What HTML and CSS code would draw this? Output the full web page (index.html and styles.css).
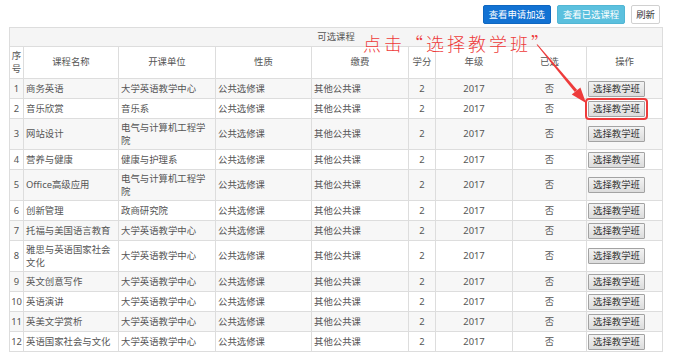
FILE: index.html
```html
<!DOCTYPE html>
<html lang="zh-CN">
<head>
<meta charset="utf-8">
<title>可选课程</title>
<link rel="stylesheet" href="styles.css">
</head>
<body>
<div class="page">
  <div class="toolbar">
    <button class="tbtn primary">查看申请加选</button>
    <button class="tbtn info">查看已选课程</button>
    <button class="tbtn plain">刷新</button>
  </div>
  <table class="grid">
    <colgroup>
      <col class="c-seq"><col class="c-name"><col class="c-unit"><col class="c-kind"><col class="c-fee"><col class="c-credit"><col class="c-grade"><col class="c-sel"><col class="c-op">
    </colgroup>
    <thead>
      <tr class="title"><th colspan="9">可选课程</th></tr>
      <tr class="head">
        <th class="seq">序号</th><th>课程名称</th><th>开课单位</th><th>性质</th><th>缴费</th><th>学分</th><th>年级</th><th>已选</th><th>操作</th>
      </tr>
    </thead>
    <tbody>
      <tr><td class="seq">1</td><td>商务英语</td><td>大学英语教学中心</td><td>公共选修课</td><td>其他公共课</td><td class="ctr">2</td><td class="ctr">2017</td><td class="ctr">否</td><td><button class="pick">选择教学班</button></td></tr>
      <tr><td class="seq">2</td><td>音乐欣赏</td><td>音乐系</td><td>公共选修课</td><td>其他公共课</td><td class="ctr">2</td><td class="ctr">2017</td><td class="ctr">否</td><td><button class="pick marked">选择教学班</button></td></tr>
      <tr><td class="seq">3</td><td>网站设计</td><td>电气与计算机工程学院</td><td>公共选修课</td><td>其他公共课</td><td class="ctr">2</td><td class="ctr">2017</td><td class="ctr">否</td><td><button class="pick">选择教学班</button></td></tr>
      <tr><td class="seq">4</td><td>营养与健康</td><td>健康与护理系</td><td>公共选修课</td><td>其他公共课</td><td class="ctr">2</td><td class="ctr">2017</td><td class="ctr">否</td><td><button class="pick">选择教学班</button></td></tr>
      <tr><td class="seq">5</td><td>Office高级应用</td><td>电气与计算机工程学院</td><td>公共选修课</td><td>其他公共课</td><td class="ctr">2</td><td class="ctr">2017</td><td class="ctr">否</td><td><button class="pick">选择教学班</button></td></tr>
      <tr><td class="seq">6</td><td>创新管理</td><td>政商研究院</td><td>公共选修课</td><td>其他公共课</td><td class="ctr">2</td><td class="ctr">2017</td><td class="ctr">否</td><td><button class="pick">选择教学班</button></td></tr>
      <tr><td class="seq">7</td><td>托福与美国语言教育</td><td>大学英语教学中心</td><td>公共选修课</td><td>其他公共课</td><td class="ctr">2</td><td class="ctr">2017</td><td class="ctr">否</td><td><button class="pick">选择教学班</button></td></tr>
      <tr><td class="seq">8</td><td>雅思与英语国家社会文化</td><td>大学英语教学中心</td><td>公共选修课</td><td>其他公共课</td><td class="ctr">2</td><td class="ctr">2017</td><td class="ctr">否</td><td><button class="pick">选择教学班</button></td></tr>
      <tr><td class="seq">9</td><td>英文创意写作</td><td>大学英语教学中心</td><td>公共选修课</td><td>其他公共课</td><td class="ctr">2</td><td class="ctr">2017</td><td class="ctr">否</td><td><button class="pick">选择教学班</button></td></tr>
      <tr><td class="seq">10</td><td>英语演讲</td><td>大学英语教学中心</td><td>公共选修课</td><td>其他公共课</td><td class="ctr">2</td><td class="ctr">2017</td><td class="ctr">否</td><td><button class="pick">选择教学班</button></td></tr>
      <tr><td class="seq">11</td><td>英美文学赏析</td><td>大学英语教学中心</td><td>公共选修课</td><td>其他公共课</td><td class="ctr">2</td><td class="ctr">2017</td><td class="ctr">否</td><td><button class="pick">选择教学班</button></td></tr>
      <tr><td class="seq">12</td><td>英语国家社会与文化</td><td>大学英语教学中心</td><td>公共选修课</td><td>其他公共课</td><td class="ctr">2</td><td class="ctr">2017</td><td class="ctr">否</td><td><button class="pick">选择教学班</button></td></tr>
    </tbody>
  </table>
  <div class="note">点击“选择教学班”</div>
  <svg class="arrow" width="692" height="359" viewBox="0 0 692 359" aria-hidden="true">
    <polygon points="536.6,44.7 537.4,44.3 577.2,90.0 574.8,92.0" fill="#ee3b3b"/>
    <polygon points="586,103 571.8,94.6 580.4,87.6" fill="#ee3b3b"/>
  </svg>
</div>
</body>
</html>
```

FILE: styles.css
```css
html, body {
  margin: 0;
  padding: 0;
  background: #ffffff;
}

body {
  font-family: "Noto Sans", "Noto Sans CJK SC", sans-serif;
  font-size: 9.4px;
  color: #555555;
}

.page {
  position: relative;
  width: 692px;
  height: 359px;
  padding: 5px 0 0 9px;
  box-sizing: border-box;
  overflow: hidden;
}

.toolbar {
  width: 653px;
  display: flex;
  justify-content: flex-end;
  gap: 6px;
  padding-right: 2px;
  box-sizing: border-box;
  margin-bottom: 3px;
}

.tbtn {
  font-family: "Noto Sans", "Noto Sans CJK SC", sans-serif;
  font-size: 9.4px;
  height: 19px;
  line-height: 17px;
  padding: 0 5px;
  border-radius: 2px;
  border: 1px solid transparent;
  margin: 0;
  cursor: pointer;
}

.tbtn.primary {
  background: #1272d3;
  border-color: #0f67c0;
  color: #ffffff;
}

.tbtn.info {
  background: #5bc0de;
  border-color: #52b6d4;
  color: #ffffff;
}

.tbtn.plain {
  background: #ffffff;
  border-color: #d0d0d0;
  color: #333333;
  padding: 0 4px;
}

.grid {
  width: 653px;
  table-layout: fixed;
  border-collapse: collapse;
}

.c-seq { width: 14px; }
.c-name { width: 95px; }
.c-unit { width: 97px; }
.c-kind { width: 96px; }
.c-fee { width: 97px; }
.c-credit { width: 27px; }
.c-grade { width: 77px; }
.c-sel { width: 74px; }
.c-op { width: 76px; }

.grid th,
.grid td {
  border: 1px solid #dddddd;
  padding: 2px 2px 1px 2px;
  line-height: 13.5px;
  vertical-align: middle;
  font-weight: normal;
  text-align: left;
  word-break: break-all;
}

.grid th {
  text-align: center;
}

.grid .title th {
  background: #f5f5f5;
  padding-top: 2px;
  padding-bottom: 2px;
}

.grid .head th {
  padding-top: 2px;
  padding-bottom: 2px;
}

.grid .seq {
  padding-left: 0;
  padding-right: 0;
  text-align: center;
}

.grid .ctr {
  text-align: center;
}

.grid tbody tr:nth-child(odd) td {
  background: #f7f7f7;
}

.pick {
  font-family: "Noto Sans", "Noto Sans CJK SC", sans-serif;
  font-size: 9.4px;
  color: #333333;
  height: 16px;
  line-height: 14px;
  padding: 0 4px;
  margin: 0 0 0 -1px;
  border: 1px solid #a3a3a3;
  border-radius: 1px;
  background: linear-gradient(#f3f3f3, #dcdcdc);
  display: block;
}

.pick.marked {
  outline: 2px solid #ee3b3b;
  outline-offset: 1px;
}

.note {
  position: absolute;
  left: 363px;
  top: 34px;
  font-family: "Noto Sans CJK SC", sans-serif;
  font-weight: 300;
  font-size: 18px;
  line-height: 18px;
  letter-spacing: 3px;
  color: #ee3b3b;
  white-space: nowrap;
}

.arrow {
  position: absolute;
  left: 0;
  top: 0;
  pointer-events: none;
}
```
